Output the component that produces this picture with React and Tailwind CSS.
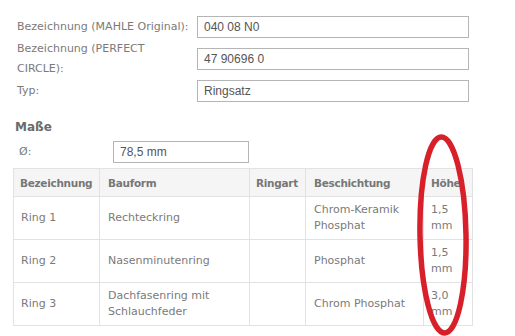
import React from "react";

const fields = [
  { label: ["Bezeichnung (MAHLE Original):"], value: "040 08 N0" },
  { label: ["Bezeichnung (PERFECT", "CIRCLE):"], value: "47 90696 0" },
  { label: ["Typ:"], value: "Ringsatz" },
];

const rings = [
  { name: "Ring 1", form: ["Rechteckring"], art: "", coat: ["Chrom-Keramik", "Phosphat"], h: ["1,5", "mm"] },
  { name: "Ring 2", form: ["Nasenminutenring"], art: "", coat: ["Phosphat"], h: ["1,5", "mm"] },
  { name: "Ring 3", form: ["Dachfasenring mit", "Schlauchfeder"], art: "", coat: ["Chrom Phosphat"], h: ["3,0", "mm"] },
];

function Lines({ items }) {
  return items.map((t, i) => (
    <React.Fragment key={i}>
      {i > 0 && <br />}
      {t}
    </React.Fragment>
  ));
}

function App() {
  return (
    <div className="relative w-[515px] h-[336px] overflow-hidden bg-white text-[11px] text-[#7a7a7a] font-['DejaVu_Sans',sans-serif]">
      <div className="pt-[16px] pl-[17px]">
        {fields.map((f) => (
          <div key={f.value} className="flex items-center h-[22px] mb-[10px]">
            <div className="w-[180px] leading-[20px]">
              <Lines items={f.label} />
            </div>
            <div className="w-[272px] h-[22px] border border-[#b5b5b5] px-[6px] flex items-center text-[12px] text-[#555] font-['Liberation_Sans',sans-serif]">
              {f.value}
            </div>
          </div>
        ))}
      </div>

      <div className="pl-[15px] mt-[16px] text-[12px] font-bold text-[#6b6b6b]">Maße</div>

      <div className="flex items-center pl-[19px] mt-[5px]">
        <div className="w-[94px]">Ø:</div>
        <div className="w-[136px] h-[22px] border border-[#b5b5b5] px-[6px] flex items-center text-[12px] text-[#555] font-['Liberation_Sans',sans-serif]">
          78,5 mm
        </div>
      </div>

      <table className="ml-[13px] mt-[5px] w-[460px] table-fixed border-collapse leading-[16px]">
        <thead>
          <tr className="h-[28px] bg-[#f5f5f5] text-left font-bold text-[#777] text-[10.5px] tracking-[-0.3px]">
            <th className="w-[86px] border border-[#e2e2e2] px-[6px]">Bezeichnung</th>
            <th className="w-[150px] border border-[#e2e2e2] px-[8px]">Bauform</th>
            <th className="w-[56px] border border-[#e2e2e2] px-[6px]">Ringart</th>
            <th className="w-[118px] border border-[#e2e2e2] px-[8px]">Beschichtung</th>
            <th className="border border-[#e2e2e2] px-[7px]">Höhe</th>
          </tr>
        </thead>
        <tbody>
          {rings.map((r) => (
            <tr key={r.name} className="h-[43px]">
              <td className="border border-[#e2e2e2] px-[7px]">{r.name}</td>
              <td className="border border-[#e2e2e2] px-[8px]"><Lines items={r.form} /></td>
              <td className="border border-[#e2e2e2] px-[8px]">{r.art}</td>
              <td className="border border-[#e2e2e2] px-[8px]"><Lines items={r.coat} /></td>
              <td className="border border-[#e2e2e2] px-[7px]"><Lines items={r.h} /></td>
            </tr>
          ))}
        </tbody>
      </table>

      {/* red marker around the Höhe column */}
      <svg className="absolute left-[412px] top-[130px]" width="62" height="210" viewBox="0 0 62 210">
        <ellipse cx="31" cy="105" rx="23" ry="98" fill="none" stroke="#d8202a" strokeWidth="5.5" transform="rotate(-1 31 105)" />
      </svg>
    </div>
  );
}

export default App;
